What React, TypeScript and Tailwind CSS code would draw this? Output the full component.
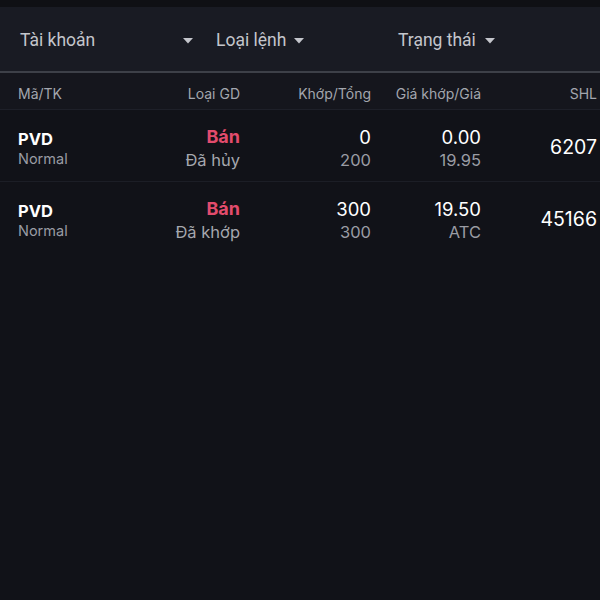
const rows = [
  { code: 'PVD', kind: 'Normal', side: 'Bán', status: 'Đã hủy', matched: '0', total: '200', price: '0.00', orderPrice: '19.95', shl: '6207' },
  { code: 'PVD', kind: 'Normal', side: 'Bán', status: 'Đã khớp', matched: '300', total: '300', price: '19.50', orderPrice: 'ATC', shl: '45166' },
];

function Caret() {
  return (
    <svg width="10" height="6" viewBox="0 0 10 6" className="fill-[#c4c6cc]">
      <path d="M0 0h10L5 5.5z" />
    </svg>
  );
}

const grid = 'grid grid-cols-[130px_92px_131px_110px_116px] pl-[18px]';

export default function App() {
  return (
    <div className="w-[600px] h-[600px] overflow-hidden bg-[#111218] font-['Inter',sans-serif]">
      <div className="h-[7px] bg-[#0f1014]" />
      <div className="h-[64px] pt-[3px] bg-[#191b23] flex items-center font-['Roboto',sans-serif] text-[17.5px] text-[#c4c6cc]">
        <div className="w-[198px] pl-[20px] pr-[5px] flex items-center justify-between">
          <span>Tài khoản</span>
          <Caret />
        </div>
        <div className="w-[182px] pl-[18px] flex items-center gap-[8px]">
          <span>Loại lệnh</span>
          <Caret />
        </div>
        <div className="pl-[18px] flex items-center gap-[9px]">
          <span>Trạng thái</span>
          <Caret />
        </div>
      </div>
      <div className="h-[2px] bg-[#3d4048]" />
      <div className={`${grid} h-[37px] pt-[4px] items-center bg-[#15161d] text-[14px] text-[#a3a6ae] border-b border-[#1e2029]`}>
        <div>Mã/TK</div>
        <div className="text-right">Loại GD</div>
        <div className="text-right">Khớp/Tổng</div>
        <div className="text-right">Giá khớp/Giá</div>
        <div className="text-right">SHL</div>
      </div>
      {rows.map((r, i) => (
        <div key={i} className={`${grid} h-[72px] pt-[4px] items-center ${i === 0 ? 'border-b border-[#1c1e26]' : ''}`}>
          <div className="flex flex-col">
            <span className="text-[16.5px] font-bold text-white leading-[22px]">{r.code}</span>
            <span className="text-[14.5px] text-[#9a9ca4] leading-[18px]">{r.kind}</span>
          </div>
          <div className="flex flex-col items-end">
            <span className="text-[18px] font-bold text-[#e24c6d] leading-[24px]">{r.side}</span>
            <span className="text-[16.5px] text-[#a5a7ae] leading-[22px]">{r.status}</span>
          </div>
          <div className="flex flex-col items-end">
            <span className="text-[18.5px] text-white leading-[24px]">{r.matched}</span>
            <span className="text-[16.5px] text-[#9a9ca4] leading-[22px]">{r.total}</span>
          </div>
          <div className="flex flex-col items-end">
            <span className="text-[18.5px] text-white leading-[24px]">{r.price}</span>
            <span className="text-[16.5px] text-[#9a9ca4] leading-[22px]">{r.orderPrice}</span>
          </div>
          <div className="text-right text-[19.5px] text-white">{r.shl}</div>
        </div>
      ))}
    </div>
  );
}
